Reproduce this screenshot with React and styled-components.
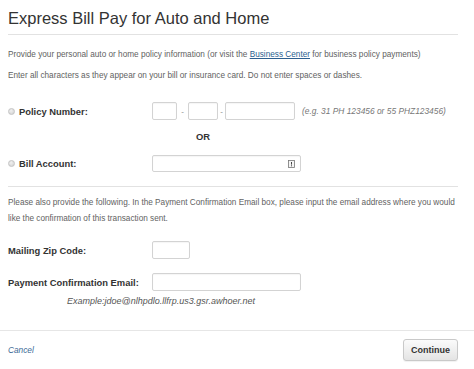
import React from 'react';
import styled, { createGlobalStyle } from 'styled-components';

const Global = createGlobalStyle`
  html, body { margin: 0; padding: 0; background: #fff; }
  body { font-family: "Liberation Sans", Arial, sans-serif; color: #333; }
  * { box-sizing: border-box; }
`;

const Page = styled.div`
  width: 474px;
  height: 369px;
  overflow: hidden;
  display: flex;
  flex-direction: column;
`;

const Main = styled.div`
  padding: 0 16px 0 8px;
  flex: 1;
`;

const Title = styled.h1`
  margin: 0;
  padding: 7px 0 5px;
  font-weight: normal;
  font-size: 16.5px;
  line-height: 22px;
  color: #333;
  border-bottom: 1px solid #e2e2e2;
`;

const Text = styled.p`
  margin: ${p => p.$mt}px 0 0;
  font-size: 8.22px;
  line-height: ${p => p.$lh || 14}px;
  color: #626262;
`;

const Link = styled.a`
  color: #2d5f8f;
  text-decoration: underline;
`;

const Row = styled.div`
  display: grid;
  grid-template-columns: 144px 1fr;
  align-items: center;
  margin-top: ${p => p.$mt}px;
`;

const Label = styled.label`
  display: flex;
  align-items: center;
  gap: 4px;
  font-weight: bold;
  font-size: 9.4px;
  color: #333;
`;

const Radio = styled.span`
  width: 7px;
  height: 7px;
  border-radius: 50%;
  border: 1px solid #c4c4c4;
  background: radial-gradient(circle at 40% 35%, #f0f0f0, #cfcfcf);
  flex: none;
`;

const Fields = styled.div`
  display: flex;
  align-items: center;
`;

const Input = styled.div`
  position: relative;
  width: ${p => p.$w}px;
  height: ${p => p.$h || 18}px;
  border: 1px solid #d3d3d3;
  border-radius: 2px;
  background: #fff;
  box-shadow: inset 0 1px 1px rgba(0,0,0,0.04);
`;

const Dash = styled.span`
  width: ${p => p.$w}px;
  text-align: center;
  font-size: 8px;
  color: #888;
`;

const Hint = styled.span`
  margin-left: 7px;
  font-style: italic;
  font-size: 8.4px;
  color: #777;
`;

const Or = styled.div`
  margin: 10px 0 0 188px;
  font-weight: bold;
  font-size: 9.4px;
  line-height: 14px;
  color: #333;
`;

const KeyIcon = styled.svg`
  position: absolute;
  right: 5px;
  top: 4px;
`;

const Divider = styled.hr`
  margin: ${p => p.$mt}px 0 0;
  border: 0;
  border-top: 1px solid #e2e2e2;
`;

const Example = styled.div`
  margin: 3px 0 0 59px;
  font-style: italic;
  font-size: 9px;
  line-height: 14px;
  color: #555;
`;

const Footer = styled.div`
  border-top: 1px solid #e6e6e6;
  height: 39px;
  padding: 8px 16px 0 8px;
  display: flex;
  justify-content: space-between;
  align-items: flex-start;
`;

const Cancel = styled.a`
  margin-top: 6px;
  font-style: italic;
  font-size: 8.3px;
  color: #3d6a96;
  text-decoration: none;
`;

const Button = styled.button`
  width: 55px;
  height: 22px;
  padding: 0;
  font-family: inherit;
  font-weight: bold;
  font-size: 9px;
  color: #333;
  border: 1px solid #c9c9c9;
  border-radius: 3px;
  background: linear-gradient(#fbfbfb, #e4e4e4);
  box-shadow: 0 1px 1px rgba(0,0,0,0.06);
`;

export default function App() {
  return (
    <Page>
      <Global />
      <Main>
        <Title>Express Bill Pay for Auto and Home</Title>
        <Text $mt={13}>
          Provide your personal auto or home policy information (or visit the{' '}
          <Link>Business Center</Link> for business policy payments)
        </Text>
        <Text $mt={7}>
          Enter all characters as they appear on your bill or insurance card. Do not enter spaces or dashes.
        </Text>

        <Row $mt={19}>
          <Label><Radio />Policy Number:</Label>
          <Fields>
            <Input $w={25} />
            <Dash $w={11}>-</Dash>
            <Input $w={30} />
            <Dash $w={7}>-</Dash>
            <Input $w={70} />
            <Hint>(e.g. 31 PH 123456 or 55 PHZ123456)</Hint>
          </Fields>
        </Row>
        <Or>OR</Or>
        <Row $mt={11}>
          <Label><Radio />Bill Account:</Label>
          <Fields>
            <Input $w={149} $h={17}>
              <KeyIcon width="7" height="8" viewBox="0 0 7 8">
                <rect x="0.5" y="0.5" width="6" height="7" fill="#f4f4f4" stroke="#777" strokeWidth="0.8" />
                <line x1="3.5" y1="2" x2="3.5" y2="4.6" stroke="#444" strokeWidth="1" />
                <rect x="3" y="5.3" width="1" height="1" fill="#444" />
              </KeyIcon>
            </Input>
          </Fields>
        </Row>

        <Divider $mt={14} />
        <Text $mt={8} $lh={16}>
          Please also provide the following. In the Payment Confirmation Email box, please input the email address where you would like the confirmation of this transaction sent.
        </Text>

        <Row $mt={14}>
          <Label>Mailing Zip Code:</Label>
          <Fields><Input $w={38} /></Fields>
        </Row>
        <Row $mt={14}>
          <Label>Payment Confirmation Email:</Label>
          <Fields><Input $w={149} /></Fields>
        </Row>
        <Example>Example:jdoe@nlhpdlo.llfrp.us3.gsr.awhoer.net</Example>
      </Main>
      <Footer>
        <Cancel>Cancel</Cancel>
        <Button>Continue</Button>
      </Footer>
    </Page>
  );
}
